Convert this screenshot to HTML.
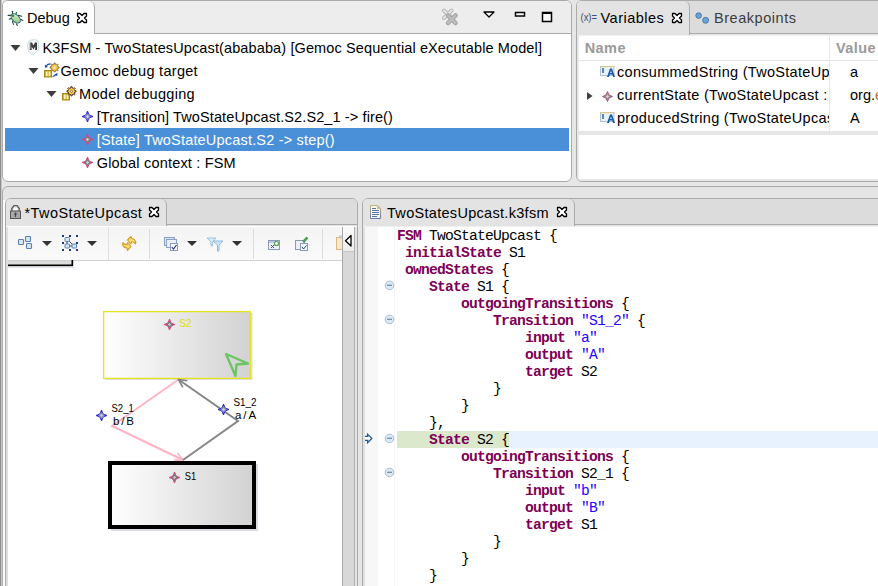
<!DOCTYPE html>
<html><head><meta charset="utf-8">
<style>
*{margin:0;padding:0;box-sizing:border-box}
html,body{width:878px;height:586px;overflow:hidden;background:#e6e6e6;font-family:"Liberation Sans",sans-serif;font-size:14.5px;color:#000}
.a{position:absolute}
.t{position:absolute;white-space:pre;line-height:17px;font-size:14.5px}
svg{position:absolute;overflow:visible}
.mono{font-family:"Liberation Mono",monospace;font-size:14.67px;letter-spacing:-0.8px;line-height:17px;white-space:pre}
.kw{color:#7f0055;font-weight:bold}
.st{color:#2a00ff}
.dl{position:absolute;white-space:pre;font-size:11.5px;line-height:13px}
</style></head><body>
<!-- far-left strip -->
<div class="a" style="left:0;top:0;width:1px;height:586px;background:#8c8c8c"></div>
<div class="a" style="left:1px;top:0;width:1px;height:586px;background:#cacaca"></div>

<!-- ===== Debug panel ===== -->
<div class="a" style="left:2px;top:0;width:570px;height:182px;border:1px solid #aaa;border-radius:6px;background:#fff;overflow:hidden">
  <div class="a" style="left:0;top:0;width:568px;height:33px;background:#ededed;border-bottom:1px solid #aaa"></div>
  <div class="a" style="left:0;top:0;width:92px;height:33px;background:#fff;border-right:1px solid #aaa;border-top-right-radius:6px"></div>
</div>
<!-- bug icon -->
<svg style="left:0;top:0" width="30" height="30">
  <g stroke="#244a3a" stroke-width="1.1" stroke-linecap="round">
    <line x1="12.5" y1="11.3" x2="12.5" y2="14.5"/><line x1="16.4" y1="12.4" x2="15.6" y2="15"/>
    <line x1="8.1" y1="15.4" x2="11.5" y2="15.4"/><line x1="9.3" y1="19.3" x2="12" y2="18.3"/>
    <line x1="12.5" y1="21.4" x2="13.4" y2="24.4"/><line x1="16.4" y1="23.7" x2="17.3" y2="25.5"/>
    <line x1="18.3" y1="15.4" x2="21.7" y2="16.3"/><line x1="20.5" y1="19.3" x2="22.8" y2="20.5"/>
  </g>
  <defs><linearGradient id="bg1" x1="0" y1="0" x2="1" y2="1"><stop offset="0" stop-color="#e0f4d0"/><stop offset="1" stop-color="#88c078"/></linearGradient></defs>
  <ellipse cx="15.7" cy="18.4" rx="5.6" ry="3.4" transform="rotate(45 15.7 18.4)" fill="url(#bg1)" stroke="#2a6a80" stroke-width="1"/>
  <circle cx="13" cy="15.8" r="1.2" fill="#3a7a50"/>
</svg>
<div class="t" style="left:27px;top:10px;letter-spacing:0px">Debug</div>
<svg style="left:77px;top:13px" width="10" height="10"><path d="M0.5 0.5 L3 0.5 L5 2.5 L7 0.5 L9.5 0.5 L9.5 3 L7.5 5 L9.5 7 L9.5 9.5 L7 9.5 L5 7.5 L3 9.5 L0.5 9.5 L0.5 7 L2.5 5 L0.5 3 Z" fill="#fff" stroke="#000" stroke-width="1.3" stroke-linejoin="round"/></svg>
<!-- toolbar icons -->
<svg style="left:0;top:0" width="570" height="34">
  <g stroke="#b8b8b8" stroke-width="4" stroke-linecap="round"><path d="M444 10.5 L451.5 18 M451.5 10.5 L444 18"/></g>
  <g stroke="#e4e4e4" stroke-width="2" stroke-linecap="round"><path d="M444 10.5 L451.5 18 M451.5 10.5 L444 18"/></g>
  <g stroke="#a0a0a0" stroke-width="4.5" stroke-linecap="round"><path d="M448 15.5 L455.5 23 M455.5 15.5 L448 23"/></g>
  <g stroke="#bcbcbc" stroke-width="2.5" stroke-linecap="round"><path d="M448 15.5 L455.5 23 M455.5 15.5 L448 23"/></g>
  <path d="M484 12 L494 12 L489 17 Z" fill="#fff" stroke="#000" stroke-width="1.3" stroke-linejoin="round"/>
  <rect x="515.5" y="12.5" width="9" height="3.5" fill="#fff" stroke="#000" stroke-width="1.5"/>
  <rect x="542.5" y="12.5" width="9" height="9" fill="#fff" stroke="#000" stroke-width="1.5"/>
  <rect x="542" y="12" width="10" height="2" fill="#000"/>
</svg>
<!-- tree -->
<svg style="left:0;top:0" width="100" height="180">
  <path d="M10.5 45 L20.5 45 L15.5 51 Z" fill="#3c3c3c"/>
  <path d="M28.5 68 L38.5 68 L33.5 74 Z" fill="#3c3c3c"/>
  <path d="M46.5 91 L56.5 91 L51.5 97 Z" fill="#3c3c3c"/>
  <!-- launcher icon -->
  <path d="M28.5 41.5 Q33 38.5 38 40.5 L38.8 48 Q38.5 51 36 52 L33.5 54.8 L31.5 54.5 L28.5 51 Q27.2 47 27.8 44 Z" fill="#f6f6f6" stroke="#a8cce0" stroke-width="0.9" stroke-dasharray="1.5 0.5"/>
  <path d="M29.8 50 L29.8 42.5 L32 42.5 L33.5 45.5 L35 42.5 L37 42.5 L37 50 L35.2 50 L35.2 46.5 L33.5 49.5 L31.6 46.5 L31.6 50 Z" fill="#3c3c3c"/>
  <rect x="30" y="43" width="1.2" height="6" fill="#707070"/>
  <!-- gemoc target icon -->
  <rect x="44.5" y="70.5" width="7" height="6.5" fill="#c8a020" stroke="#b08a10" stroke-width="1"/>
  <rect x="45.8" y="71.5" width="1.8" height="4.6" fill="#fff8c8"/><rect x="48.6" y="71.5" width="1.8" height="4.6" fill="#fff8c8"/>
  <path d="M57.82 66.79 L59.06 66.92 L59.06 68.08 L57.82 68.21 L57.38 69.28 L58.17 70.24 L57.34 71.07 L56.38 70.28 L55.31 70.72 L55.18 71.96 L54.02 71.96 L53.89 70.72 L52.82 70.28 L51.86 71.07 L51.03 70.24 L51.82 69.28 L51.38 68.21 L50.14 68.08 L50.14 66.92 L51.38 66.79 L51.82 65.72 L51.03 64.76 L51.86 63.93 L52.82 64.72 L53.89 64.28 L54.02 63.04 L55.18 63.04 L55.31 64.28 L56.38 64.72 L57.34 63.93 L58.17 64.76 L57.38 65.72 Z" fill="#f8c848" stroke="#8a6a40" stroke-width="0.9"/>
  <circle cx="54.6" cy="67.5" r="0.9" fill="#fff"/>
  <path d="M50.5 63.8 Q47.5 63.8 46.3 65.8" stroke="#1a4a9a" stroke-width="1.2" fill="none"/><path d="M44.8 64.5 L45 67.8 L48 67 Z" fill="#1a4a9a"/>
  <path d="M52.5 76.5 Q55 76.2 56 74.3" stroke="#1a4a9a" stroke-width="1.2" fill="none"/><path d="M57.3 72.8 L57.3 76 L54.5 74.8 Z" fill="#1a4a9a"/>
  <!-- model debugging icon -->
  <rect x="62.5" y="93.5" width="7" height="6.5" fill="#c8a020" stroke="#b08a10" stroke-width="1"/>
  <rect x="63.8" y="94.5" width="1.8" height="4.6" fill="#fff8c8"/><rect x="66.6" y="94.5" width="1.8" height="4.6" fill="#fff8c8"/>
  <path d="M74.82 90.57 L76.06 90.71 L76.06 91.89 L74.82 92.03 L74.36 93.13 L75.15 94.11 L74.31 94.95 L73.33 94.16 L72.23 94.62 L72.09 95.86 L70.91 95.86 L70.77 94.62 L69.67 94.16 L68.69 94.95 L67.85 94.11 L68.64 93.13 L68.18 92.03 L66.94 91.89 L66.94 90.71 L68.18 90.57 L68.64 89.47 L67.85 88.49 L68.69 87.65 L69.67 88.44 L70.77 87.98 L70.91 86.74 L72.09 86.74 L72.23 87.98 L73.33 88.44 L74.31 87.65 L75.15 88.49 L74.36 89.47 Z" fill="#f8c848" stroke="#4a2a20" stroke-width="1"/>
  <circle cx="71.5" cy="91.3" r="1" fill="#fff" stroke="#4a2a20" stroke-width="0.5"/>
  <!-- diamonds -->
  <g id="dmd"></g>
</svg>
<div class="t" style="left:42.5px;top:40px;letter-spacing:0.12px">K3FSM - TwoStatesUpcast(abababa) [Gemoc Sequential eXecutable Model]</div>
<div class="t" style="left:60.5px;top:63px;letter-spacing:0.29px">Gemoc debug target</div>
<div class="t" style="left:79px;top:86px;letter-spacing:0.31px">Model debugging</div>
<div class="t" style="left:96.7px;top:109px;letter-spacing:0.11px">[Transition] TwoStateUpcast.S2.S2_1 -&gt; fire()</div>
<div class="a" style="left:5px;top:128px;width:564px;height:23px;background:#4a90d9"></div>
<div class="t" style="left:96.7px;top:132px;letter-spacing:0.19px;color:#fff">[State] TwoStateUpcast.S2 -&gt; step()</div>
<div class="t" style="left:96.7px;top:155px;letter-spacing:0.19px">Global context : FSM</div>
<svg style="left:0;top:0" width="100" height="180">
  <path d="M87.5 111.0 L89.1 114.9 L93.0 116.5 L89.1 118.1 L87.5 122.0 L85.9 118.1 L82.0 116.5 L85.9 114.9 Z" fill="#2a2ad8" stroke="#2a2ad8" stroke-width="0.9" stroke-linejoin="round"/><path d="M87.5 113.1 L90.9 116.5 L87.5 119.9 L84.1 116.5 Z" fill="#8888b8"/><path d="M87.5 114.9 L89.1 116.5 L87.5 118.1 L85.9 116.5 Z" fill="#d8d8e8"/>
  <path d="M87.5 134.0 L89.1 137.9 L93.0 139.5 L89.1 141.1 L87.5 145.0 L85.9 141.1 L82.0 139.5 L85.9 137.9 Z" fill="#e04080" stroke="#e04080" stroke-width="0.9" stroke-linejoin="round"/><path d="M87.5 136.1 L90.9 139.5 L87.5 142.9 L84.1 139.5 Z" fill="#808080"/><path d="M87.5 137.9 L89.1 139.5 L87.5 141.1 L85.9 139.5 Z" fill="#d8d8d8"/>
  <path d="M87.5 157.0 L89.1 160.9 L93.0 162.5 L89.1 164.1 L87.5 168.0 L85.9 164.1 L82.0 162.5 L85.9 160.9 Z" fill="#d84888" stroke="#d84888" stroke-width="0.9" stroke-linejoin="round"/><path d="M87.5 159.1 L90.9 162.5 L87.5 165.9 L84.1 162.5 Z" fill="#808080"/><path d="M87.5 160.9 L89.1 162.5 L87.5 164.1 L85.9 162.5 Z" fill="#d8d8d8"/>
</svg>

<!-- ===== Variables panel ===== -->
<div class="a" style="left:576px;top:0;width:310px;height:182px;border:1px solid #aaa;border-radius:6px;background:#fff;overflow:hidden">
  <div class="a" style="left:0;top:0;width:310px;height:33px;background:#dcdcdc;border-bottom:1px solid #aaa"></div>
  <div class="a" style="left:0;top:33px;width:310px;height:1px;background:#e3e3e3"></div>
  <div class="a" style="left:0;top:34px;width:310px;height:1px;background:#f0f0f0"></div>
  <div class="a" style="left:0;top:0;width:113px;height:34px;background:#e3e3e3;border-right:1px solid #aaa;border-top-right-radius:6px"></div>
  <div class="a" style="left:0;top:59px;width:310px;height:1px;background:#e4e4e4"></div>
  <div class="a" style="left:252px;top:35px;width:1px;height:96px;background:#e8e8e8"></div>
  <div class="a" style="left:0;top:130px;width:310px;height:4px;background:#e6e6e6"></div>
  <div class="a" style="left:0;top:35px;width:2px;height:150px;background:#e8e8e8"></div>
  <div class="a" style="left:0;top:178px;width:310px;height:2px;background:#e6e6e6"></div>
</div>
<svg style="left:0;top:0" width="600" height="30"><text x="580.5" y="21" font-family="Liberation Sans" font-size="10" fill="#3a5080" textLength="16.5" lengthAdjust="spacingAndGlyphs">(x)=</text></svg>
<div class="t" style="left:600.5px;top:10px;letter-spacing:0.5px">Variables</div>
<svg style="left:672px;top:13px" width="10" height="10"><path d="M0.5 0.5 L3 0.5 L5 2.5 L7 0.5 L9.5 0.5 L9.5 3 L7.5 5 L9.5 7 L9.5 9.5 L7 9.5 L5 7.5 L3 9.5 L0.5 9.5 L0.5 7 L2.5 5 L0.5 3 Z" fill="#fff" stroke="#000" stroke-width="1.3" stroke-linejoin="round"/></svg>
<svg style="left:0;top:0" width="720" height="30">
  <circle cx="698.6" cy="15.6" r="2.8" fill="#6aa4d8" stroke="#3a6a98" stroke-width="0.8"/>
  <circle cx="705.6" cy="20.3" r="3" fill="#6aa4d8" stroke="#3a6a98" stroke-width="0.8"/>
</svg>
<div class="t" style="left:714px;top:10px;letter-spacing:0.54px;color:#3c3c3c">Breakpoints</div>
<div class="t" style="left:584.7px;top:40px;letter-spacing:0.43px;color:#9a9a9a;font-weight:bold">Name</div>
<div class="t" style="left:836px;top:40px;letter-spacing:0.43px;color:#9a9a9a;font-weight:bold">Value</div>
<div class="a" style="left:577px;top:60px;width:252px;height:71px;overflow:hidden">
  <div class="t" style="left:40px;top:4px;letter-spacing:0.3px">consummedString (TwoStateUpcast</div>
  <div class="t" style="left:40px;top:27px;letter-spacing:0.3px">currentState (TwoStateUpcast : State)</div>
  <div class="t" style="left:40px;top:50px;letter-spacing:0.3px">producedString (TwoStateUpcast</div>
</div>
<div class="t" style="left:850px;top:64px">a</div>
<div class="t" style="left:850px;top:87px">org.<span style="color:#c87020">e</span></div>
<div class="t" style="left:850px;top:110px">A</div>
<svg style="left:0;top:0" width="620" height="130">
  <rect x="600.5" y="66.5" width="13.5" height="9" fill="#e8f2fc" stroke="#b8c0cc" stroke-width="1"/>
  <rect x="600" y="66" width="14.5" height="1.2" fill="#d8c890"/>
  <rect x="602" y="68" width="2" height="5" fill="#5a8ac0"/>
  <path d="M607 77 L610 68.5 L612 68.5 L615 77 L613 77 L612.3 74.5 L609.7 74.5 L609 77 Z M610.2 73 L611.8 73 L611 70.5 Z" fill="#1a5aa0" fill-rule="evenodd"/>
  <path d="M587 92 L592.5 96 L587 100 Z" fill="#404040"/>
  <path d="M607.5 91.5 L609.1 94.9 L612.5 96.5 L609.1 98.1 L607.5 101.5 L605.9 98.1 L602.5 96.5 L605.9 94.9 Z" fill="#b05080" stroke="#b05080" stroke-width="0.9" stroke-linejoin="round"/><path d="M607.5 93.1 L610.9 96.5 L607.5 99.9 L604.1 96.5 Z" fill="#909090"/><path d="M607.5 94.9 L609.1 96.5 L607.5 98.1 L605.9 96.5 Z" fill="#d8d8d8"/>
  <rect x="600.5" y="112.5" width="13.5" height="9" fill="#e8f2fc" stroke="#b8c0cc" stroke-width="1"/>
  <rect x="600" y="112" width="14.5" height="1.2" fill="#d8c890"/>
  <rect x="602" y="114" width="2" height="5" fill="#5a8ac0"/>
  <path d="M607 123 L610 114.5 L612 114.5 L615 123 L613 123 L612.3 120.5 L609.7 120.5 L609 123 Z M610.2 119 L611.8 119 L611 116.5 Z" fill="#1a5aa0" fill-rule="evenodd"/>
</svg>

<!-- ===== Editor area outer box ===== -->
<div class="a" style="left:2px;top:186px;width:890px;height:420px;border:1px solid #aaa;border-radius:6px;background:#e5e5e5"></div>
<div class="a" style="left:3px;top:200px;width:2px;height:386px;background:#fafafa"></div>

<!-- ===== Diagram editor ===== -->
<div class="a" style="left:5px;top:198px;width:353px;height:400px;border:1px solid #aaa;border-radius:6px;background:#fff;overflow:hidden">
  <div class="a" style="left:0;top:0;width:353px;height:26px;background:#dcdcdc;border-bottom:1px solid #aaa"></div>
  <div class="a" style="left:0;top:26px;width:353px;height:1px;background:#e2e2e2"></div>
  <div class="a" style="left:0;top:0;width:161px;height:27px;background:#e3e3e3;border-right:1px solid #aaa;border-top-right-radius:6px"></div>
</div>
<div class="t" style="left:24.5px;top:205px;letter-spacing:0.44px">*TwoStateUpcast</div>
<svg style="left:149px;top:207px" width="10" height="10"><path d="M0.5 0.5 L3 0.5 L5 2.5 L7 0.5 L9.5 0.5 L9.5 3 L7.5 5 L9.5 7 L9.5 9.5 L7 9.5 L5 7.5 L3 9.5 L0.5 9.5 L0.5 7 L2.5 5 L0.5 3 Z" fill="#fff" stroke="#000" stroke-width="1.3" stroke-linejoin="round"/></svg>
<svg style="left:0;top:0" width="30" height="225">
  <path d="M11.8 210.8 L11.8 208.5 L14 205.6 L17 205.6 L19.2 208.5 L19.2 210.8" fill="#e8e8e8" stroke="#5a5a5a" stroke-width="1.4"/>
  <rect x="13.8" y="208" width="3.4" height="2.2" fill="#fff"/>
  <rect x="10.5" y="211" width="10" height="7.5" fill="#a8a8a8" stroke="#555" stroke-width="1"/>
  <path d="M15.5 212.5 L15.5 217 M14 214 L17 214" stroke="#444" stroke-width="1.2"/>
</svg>
<!-- diagram toolbar -->
<div class="a" style="left:8px;top:227px;width:334px;height:33px;background:linear-gradient(#f4f4f4,#fafafa)"></div>
<div class="a" style="left:8px;top:260px;width:334px;height:1px;background:#d0d0d0"></div>
<svg style="left:0;top:0" width="360" height="270">
  <g fill="#d8e6f2" stroke="#5a80b8" stroke-width="1.1">
    <rect x="18.5" y="239.5" width="5" height="5" rx="0.8"/>
    <rect x="25.5" y="236.5" width="5" height="5" rx="0.8"/>
    <rect x="26.5" y="243.5" width="5" height="5" rx="0.8"/>
  </g>
  <path d="M42 241 L52 241 L47 246 Z" fill="#333"/>
  <g fill="#1a3a7a">
    <rect x="62" y="235" width="2" height="2"/><rect x="69" y="235" width="2" height="2"/><rect x="76" y="235" width="2" height="2"/>
    <rect x="62" y="242" width="2" height="2"/><rect x="76" y="242" width="2" height="2"/>
    <rect x="62" y="249" width="2" height="2"/><rect x="69" y="249" width="2" height="2"/><rect x="76" y="249" width="2" height="2"/>
  </g>
  <path d="M67 239 L74 246 M67 239 L67 246 L74 246" stroke="#2a4a80" stroke-width="1" fill="none"/>
  <g fill="#d8e6f2" stroke="#5a80b8" stroke-width="1">
    <rect x="65" y="237.5" width="4.5" height="4" rx="0.8"/>
    <rect x="65" y="244" width="4.5" height="4" rx="0.8"/>
    <rect x="72" y="244" width="4.5" height="4" rx="0.8"/>
  </g>
  <path d="M87 241 L97 241 L92 246 Z" fill="#333"/>
  <!-- refresh -->
  <path d="M127.5 240 L131 236.3 L131.5 238.5 Q134.5 238.5 135.8 242 L135.5 244 Q134 241.5 131.5 241.8 L131 243.8 Z" fill="#f8e078" stroke="#d09818" stroke-width="1.1" stroke-linejoin="round"/>
  <path d="M131 246.5 L127.5 250.3 L127 248 Q124 248 122.7 244.5 L123 242.5 Q124.5 245 127 244.7 L127.5 242.7 Z" fill="#f8e078" stroke="#d09818" stroke-width="1.1" stroke-linejoin="round"/>
  <rect x="108" y="227" width="1" height="33" fill="#e0e0e0"/>
  <rect x="149" y="229" width="1" height="30" fill="#dcdcdc"/>
  <!-- layers -->
  <rect x="164.5" y="237.5" width="10" height="8" fill="#dbe8f4" stroke="#8aa0c0" stroke-width="1"/>
  <rect x="166.5" y="239.5" width="10" height="8" fill="#e8f0f8" stroke="#8aa0c0" stroke-width="1"/>
  <rect x="170.5" y="243.5" width="7" height="7" fill="#f4f8fc" stroke="#8a9ac0" stroke-width="1"/>
  <path d="M171.8 247 L173.5 249 L176.5 245" stroke="#2a3a70" stroke-width="1.1" fill="none"/>
  <path d="M187 241 L197 241 L192 246 Z" fill="#333"/>
  <!-- filter -->
  <path d="M207 238 L216 238 L212.5 242 L212.5 246 L211 246 L211 242 Z" fill="#d8ecf8" stroke="#9ac0d8" stroke-width="0.9"/>
  <path d="M213 241 L223 241 L219 245 L219 251 L217.5 251 L217.5 245 Z" fill="#d0e6f6" stroke="#8ab0d0" stroke-width="0.9"/>
  <path d="M232 241 L242 241 L237 246 Z" fill="#333"/>
  <rect x="253" y="229" width="1" height="30" fill="#dcdcdc"/>
  <rect x="268.5" y="240.5" width="11" height="9" fill="#eef2f8" stroke="#8a9ab8" stroke-width="1"/>
  <rect x="269" y="241" width="10" height="2" fill="#b8c8e0"/>
  <circle cx="276.5" cy="243.5" r="2" fill="#fff" stroke="#50a050" stroke-width="1.2"/>
  <path d="M271 245 L274 248 M274 245 L271 248" stroke="#3a4a90" stroke-width="1"/>
  <rect x="295.5" y="240.5" width="9" height="9" fill="#eef2f8" stroke="#8a9ab8" stroke-width="1"/>
  <rect x="300.5" y="243.5" width="7" height="7" fill="#f4f8fc" stroke="#8a9ac0" stroke-width="1"/>
  <path d="M302 247 L303.5 249 L306.5 245.5" stroke="#2a3a70" stroke-width="1" fill="none"/>
  <path d="M303 242 L307.5 237.5" stroke="#50a050" stroke-width="2.5"/>
  <rect x="322" y="229" width="1" height="30" fill="#dcdcdc"/>
  <rect x="336.5" y="237.5" width="8" height="12" fill="#fbe8c8" stroke="#d8b888" stroke-width="1"/>
  <rect x="339" y="235.5" width="4" height="3" fill="#c8c8c8"/>
</svg>
<!-- scrollbar strip -->
<div class="a" style="left:342px;top:227px;width:1px;height:370px;background:#a8a8a8"></div>
<div class="a" style="left:343px;top:227px;width:11px;height:25px;background:linear-gradient(#fafafa,#ececec)"></div>
<div class="a" style="left:343px;top:252px;width:11px;height:340px;background:#d8d8d8"></div>
<div class="a" style="left:343px;top:251px;width:11px;height:1px;background:#c8c8c8"></div>
<div class="a" style="left:354px;top:227px;width:1px;height:370px;background:#b0b0b0"></div>
<div class="a" style="left:355px;top:227px;width:2px;height:370px;background:#e2e2e2"></div>
<svg style="left:0;top:0" width="360" height="260"><path d="M351 235.5 L351 246 L345.5 240.7 Z" fill="#fff" stroke="#000" stroke-width="1.3" stroke-linejoin="round"/></svg>
<!-- left gutter of diagram panel -->
<div class="a" style="left:6px;top:227px;width:2px;height:370px;background:#dedede"></div>
<!-- diagram canvas -->
<svg style="left:0;top:0" width="360" height="586">
  <defs>
    <linearGradient id="gr" x1="0" y1="0" x2="1" y2="0">
      <stop offset="0" stop-color="#ffffff"/><stop offset="1" stop-color="#d2d2d2"/>
    </linearGradient>
    <marker id="ahp" markerWidth="10" markerHeight="10" refX="9" refY="5" orient="auto" markerUnits="userSpaceOnUse">
      <path d="M1 1 L9 5 L1 9" fill="none" stroke="#ffb4c4" stroke-width="1.6"/>
    </marker>
    <marker id="ahg" markerWidth="10" markerHeight="10" refX="9" refY="5" orient="auto" markerUnits="userSpaceOnUse">
      <path d="M1 1 L9 5 L1 9" fill="none" stroke="#808080" stroke-width="1.6"/>
    </marker>
  </defs>
  <!-- partial top box -->
  <rect x="8" y="261" width="64" height="4" fill="#dcdcdc"/>
  <rect x="8" y="266" width="66" height="2" fill="#e4e4ea"/>
  <rect x="72" y="261" width="2" height="7" fill="#e4e4ea"/>
  <rect x="8" y="264.5" width="65" height="1.6" fill="#000"/>
  <rect x="71.5" y="260" width="1.6" height="6" fill="#000"/>
  <!-- S2 box -->
  <rect x="105" y="313" width="147.5" height="67" fill="#dcdce2"/>
  <rect x="103.6" y="311.6" width="146.8" height="66.8" fill="url(#gr)" stroke="#e4e420" stroke-width="1.3"/>
  <!-- S1 box -->
  <rect x="111" y="464" width="147" height="67" fill="#dcdce2"/>
  <rect x="110" y="463" width="144" height="64" fill="url(#gr)" stroke="#000" stroke-width="4"/>
  <!-- edges -->
  <path d="M178.5 379.5 L112 426 L183 460" fill="none" stroke="#ffb4c4" stroke-width="2" marker-end="url(#ahp)"/>
  <path d="M183 460 L238 421 L178.5 379.5" fill="none" stroke="#858585" stroke-width="2" marker-end="url(#ahg)"/>
  <!-- green cursor -->
  <path d="M226 354 L248 363.5 L236.5 364.5 L235.5 376 Z" fill="none" stroke="#6cc464" stroke-width="2.4" stroke-linejoin="round"/>
  <!-- diamonds -->
  <path d="M169.5 319.0 L171.1 322.9 L175.0 324.5 L171.1 326.1 L169.5 330.0 L167.9 326.1 L164.0 324.5 L167.9 322.9 Z" fill="#d84888" stroke="#d84888" stroke-width="0.9" stroke-linejoin="round"/><path d="M169.5 321.1 L172.9 324.5 L169.5 327.9 L166.1 324.5 Z" fill="#7a7a7a"/><path d="M169.5 322.9 L171.1 324.5 L169.5 326.1 L167.9 324.5 Z" fill="#d0d0d0"/>
  <path d="M174.5 472.0 L176.1 475.9 L180.0 477.5 L176.1 479.1 L174.5 483.0 L172.9 479.1 L169.0 477.5 L172.9 475.9 Z" fill="#d84888" stroke="#d84888" stroke-width="0.9" stroke-linejoin="round"/><path d="M174.5 474.1 L177.9 477.5 L174.5 480.9 L171.1 477.5 Z" fill="#7a7a7a"/><path d="M174.5 475.9 L176.1 477.5 L174.5 479.1 L172.9 477.5 Z" fill="#d0d0d0"/>
  <path d="M101.5 410.0 L103.1 413.9 L107.0 415.5 L103.1 417.1 L101.5 421.0 L99.9 417.1 L96.0 415.5 L99.9 413.9 Z" fill="#2828d0" stroke="#2828d0" stroke-width="0.9" stroke-linejoin="round"/><path d="M101.5 412.1 L104.9 415.5 L101.5 418.9 L98.1 415.5 Z" fill="#8888b0"/><path d="M101.5 413.9 L103.1 415.5 L101.5 417.1 L99.9 415.5 Z" fill="#d0d0e0"/>
  <path d="M223.5 404.0 L225.1 407.9 L229.0 409.5 L225.1 411.1 L223.5 415.0 L221.9 411.1 L218.0 409.5 L221.9 407.9 Z" fill="#2828d0" stroke="#2828d0" stroke-width="0.9" stroke-linejoin="round"/><path d="M223.5 406.1 L226.9 409.5 L223.5 412.9 L220.1 409.5 Z" fill="#8888b0"/><path d="M223.5 407.9 L225.1 409.5 L223.5 411.1 L221.9 409.5 Z" fill="#d0d0e0"/>
</svg>
<svg style="left:0;top:0" width="360" height="586"><text x="179.3" y="327" font-family="Liberation Sans" font-size="11.5" fill="#dede10" textLength="12.2" lengthAdjust="spacingAndGlyphs">S2</text><text x="184.7" y="480" font-family="Liberation Sans" font-size="11.5" fill="#000" textLength="11.4" lengthAdjust="spacingAndGlyphs">S1</text><text x="111.5" y="412" font-family="Liberation Sans" font-size="11.5" fill="#000" textLength="22.2" lengthAdjust="spacingAndGlyphs">S2_1</text><text x="112.9" y="425" font-family="Liberation Sans" font-size="11.5" fill="#000" textLength="21" lengthAdjust="spacing">b/B</text><text x="233.5" y="406" font-family="Liberation Sans" font-size="11.5" fill="#000" textLength="23.1" lengthAdjust="spacingAndGlyphs">S1_2</text><text x="235" y="419" font-family="Liberation Sans" font-size="11.5" fill="#000" textLength="21.1" lengthAdjust="spacing">a/A</text></svg>


<!-- ===== Text editor ===== -->
<div class="a" style="left:362px;top:198px;width:530px;height:400px;border:1px solid #aaa;border-radius:6px;background:#fff;overflow:hidden">
  <div class="a" style="left:0;top:0;width:530px;height:26px;background:#dcdcdc;border-bottom:1px solid #aaa"></div>
  <div class="a" style="left:0;top:26px;width:530px;height:1px;background:#e2e2e2"></div>
  <div class="a" style="left:0;top:27px;width:530px;height:1px;background:#f0f0f0"></div>
  <div class="a" style="left:0;top:0;width:212px;height:27px;background:#e3e3e3;border-right:1px solid #aaa;border-top-right-radius:6px"></div>
  <div class="a" style="left:0;top:28px;width:2px;height:380px;background:#e0e0e0"></div>
  <div class="a" style="left:2px;top:28px;width:13px;height:380px;background:#f7f7f7"></div>
  <div class="a" style="left:31px;top:28px;width:1px;height:380px;background:#f4f4f4"></div>
  <div class="a" style="left:34px;top:232px;width:500px;height:17px;background:#e8f2fe"></div>
  <div class="a" style="left:34px;top:232px;width:112px;height:17px;background:#dce8cb"></div>
</div>
<svg style="left:0;top:0" width="390" height="225">
  <defs><linearGradient id="fg" x1="0" y1="0" x2="0" y2="1"><stop offset="0" stop-color="#c8b070"/><stop offset="1" stop-color="#6878a8"/></linearGradient></defs>
  <path d="M370.5 205.5 L377.5 205.5 L380.5 208.5 L380.5 218.5 L370.5 218.5 Z" fill="#f4f8fc" stroke="url(#fg)" stroke-width="1"/>
  <path d="M377 205.5 L377 209 L380.5 209 Z" fill="#e0b860"/>
  <g fill="#5a70a8"><rect x="372" y="208" width="4" height="1"/><rect x="372" y="210" width="7" height="1"/><rect x="372" y="212" width="7" height="1"/><rect x="372" y="214" width="7" height="1"/><rect x="372" y="216" width="5" height="1"/></g>
</svg>
<div class="t" style="left:387px;top:205px;letter-spacing:0.3px">TwoStatesUpcast.k3fsm</div>
<svg style="left:557px;top:207px" width="10" height="10"><path d="M0.5 0.5 L3 0.5 L5 2.5 L7 0.5 L9.5 0.5 L9.5 3 L7.5 5 L9.5 7 L9.5 9.5 L7 9.5 L5 7.5 L3 9.5 L0.5 9.5 L0.5 7 L2.5 5 L0.5 3 Z" fill="#fff" stroke="#000" stroke-width="1.3" stroke-linejoin="round"/></svg>
<svg style="left:0;top:0" width="400" height="586"><circle cx="389.5" cy="285.4" r="4.3" fill="#d8eaf8" stroke="#aebfd0" stroke-width="1"/><rect x="387" y="284.7" width="5" height="1.2" fill="#7a8494"/><circle cx="389.5" cy="319.4" r="4.3" fill="#d8eaf8" stroke="#aebfd0" stroke-width="1"/><rect x="387" y="318.7" width="5" height="1.2" fill="#7a8494"/><circle cx="389.5" cy="438.4" r="4.3" fill="#d8eaf8" stroke="#aebfd0" stroke-width="1"/><rect x="387" y="437.7" width="5" height="1.2" fill="#7a8494"/><circle cx="389.5" cy="472.4" r="4.3" fill="#d8eaf8" stroke="#aebfd0" stroke-width="1"/><rect x="387" y="471.7" width="5" height="1.2" fill="#7a8494"/><path d="M365 436.3 L367.6 436.3 L367.6 434.2 L371.8 438.4 L367.6 442.6 L367.6 440.4 L365 440.4" fill="#fff" stroke="#1a5aa0" stroke-width="1.3" stroke-linejoin="miter"/></svg>
<div class="a mono" style="left:397px;top:228px"><span class="kw">FSM</span> TwoStateUpcast {
 <span class="kw">initialState</span> S1
 <span class="kw">ownedStates</span> {
    <span class="kw">State</span> S1 {
        <span class="kw">outgoingTransitions</span> {
            <span class="kw">Transition</span> <span class="st">"S1_2"</span> {
                <span class="kw">input</span> <span class="st">"a"</span>
                <span class="kw">output</span> <span class="st">"A"</span>
                <span class="kw">target</span> S2
            }
        }
    },
    <span class="kw">State</span> S2 {
        <span class="kw">outgoingTransitions</span> {
            <span class="kw">Transition</span> S2_1 {
                <span class="kw">input</span> <span class="st">"b"</span>
                <span class="kw">output</span> <span class="st">"B"</span>
                <span class="kw">target</span> S1
            }
        }
    }</div>

</body></html>
